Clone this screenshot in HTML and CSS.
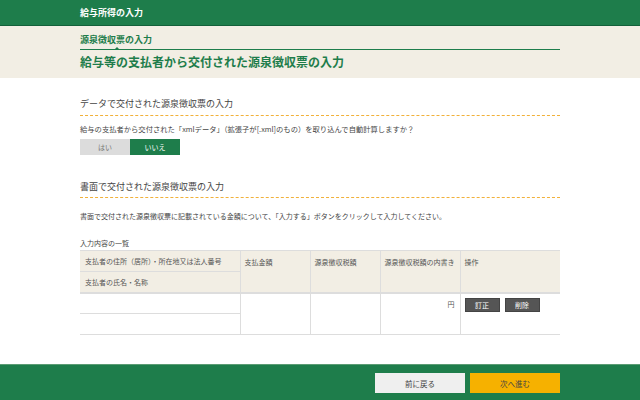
FILE: index.html
```html
<!DOCTYPE html>
<html lang="ja">
<head>
<meta charset="utf-8">
<title>給与所得の入力</title>
<link rel="stylesheet" href="styles.css">
</head>
<body>
<div class="page">
  <header class="topbar">
    <div class="wrap"><span class="topbar-title">給与所得の入力</span></div>
  </header>
  <div class="band">
    <div class="wrap">
      <div class="subtitle">源泉徴収票の入力</div>
      <h1 class="heading">給与等の支払者から交付された源泉徴収票の入力</h1>
    </div>
  </div>
  <main class="main wrap">
    <h2 class="sec-title sec-first">データで交付された源泉徴収票の入力</h2>
    <p class="question">給与の支払者から交付された「xmlデータ」（拡張子が[.xml]のもの）を取り込んで自動計算しますか？</p>
    <div class="toggle">
      <span class="tg tg-off">はい</span><span class="tg tg-on">いいえ</span>
    </div>
    <h2 class="sec-title sec-second">書面で交付された源泉徴収票の入力</h2>
    <p class="desc">書面で交付された源泉徴収票に記載されている金額について、「入力する」ボタンをクリックして入力してください。</p>
    <p class="list-title">入力内容の一覧</p>
    <table class="tbl">
      <colgroup>
        <col class="c1"><col class="c2"><col class="c3"><col class="c4"><col class="c5">
      </colgroup>
      <thead>
        <tr>
          <th class="h-row">支払者の住所（居所）・所在地又は法人番号</th>
          <th rowspan="2" class="h-span">支払金額</th>
          <th rowspan="2" class="h-span">源泉徴収税額</th>
          <th rowspan="2" class="h-span">源泉徴収税額の内書き</th>
          <th rowspan="2" class="h-span">操作</th>
        </tr>
        <tr>
          <th class="h-row">支払者の氏名・名称</th>
        </tr>
      </thead>
      <tbody>
        <tr>
          <td class="b-row"></td>
          <td rowspan="2" class="b-span"></td>
          <td rowspan="2" class="b-span"></td>
          <td rowspan="2" class="b-span yen">円</td>
          <td rowspan="2" class="b-span ops"><span class="op-btn">訂正</span><span class="op-btn">削除</span></td>
        </tr>
        <tr>
          <td class="b-row"></td>
        </tr>
      </tbody>
    </table>
  </main>
  <footer class="footer">
    <div class="wrap footer-inner">
      <span class="fbtn fbtn-back">前に戻る</span>
      <span class="fbtn fbtn-next">次へ進む</span>
    </div>
  </footer>
</div>
</body>
</html>
```
FILE: styles.css
```css
* { box-sizing: border-box; margin: 0; padding: 0; }
html, body { width: 640px; height: 400px; overflow: hidden; }
body {
  font-family: "Noto Sans CJK JP", "Noto Sans", "Liberation Sans", sans-serif;
  color: #555;
  background: #fff;
}
.page { display: flex; flex-direction: column; height: 400px; }
.wrap { width: 480px; margin-left: 80px; }

.topbar {
  height: 26px;
  background: #1e7d4b;
  border-bottom: 1px solid #13603a;
}
.topbar .wrap { height: 25px; display: flex; align-items: center; }
.topbar-title { color: #fff; font-size: 9px; font-weight: bold; line-height: 10px; }

.band { background: #f2eee4; height: 52px; }
.subtitle {
  position: relative;
  padding-top: 9px;
  padding-bottom: 4px;
  font-size: 9px;
  line-height: 10px;
  font-weight: bold;
  color: #1e7d4b;
  border-bottom: 1px solid #1e7d4b;
}
.subtitle::after {
  content: "";
  position: absolute;
  left: 35px;
  bottom: 0;
  border-left: 2px solid transparent;
  border-right: 2px solid transparent;
  border-bottom: 2px solid #1e7d4b;
}
.heading {
  margin-top: 3px;
  font-size: 12px;
  line-height: 18px;
  font-weight: bold;
  color: #1e7d4b;
}

.main { flex: 1; }
.sec-title {
  font-size: 9px;
  line-height: 12px;
  font-weight: normal;
  color: #444;
  padding-bottom: 5px;
  border-bottom: 1px dashed #f1b13a;
}
.sec-first { margin-top: 20px; }
.sec-second { margin-top: 26px; padding-bottom: 4px; }
.question { margin-top: 8px; font-size: 7.3px; line-height: 10px; color: #444; }
.toggle { margin-top: 5px; display: flex; }
.tg {
  width: 50px; height: 16px;
  display: flex; align-items: center; justify-content: center;
  font-size: 7px;
}
.tg-off { background: #dcdcdc; color: #777; }
.tg-on { background: #1e7d4b; color: #fff; }
.desc { margin-top: 13px; font-size: 7px; line-height: 10px; color: #444; }
.list-title { margin-top: 17px; font-size: 7px; line-height: 10px; color: #444; }

.tbl {
  margin-top: 2px;
  width: 480px;
  table-layout: fixed;
  border-collapse: collapse;
  font-size: 7px;
  color: #555;
}
.c1 { width: 160px; } .c2 { width: 70px; } .c3 { width: 70px; } .c4 { width: 80px; } .c5 { width: 100px; }
.tbl th {
  background: #f2eee4;
  font-weight: normal;
  text-align: left;
  border-top: 1px solid #ddd;
}
.tbl thead tr:last-child th, .tbl th.h-span { border-bottom: 2px solid #ddd; }
.h-row { height: 21px; padding: 0 5px; vertical-align: middle; }
.h-span { vertical-align: top; padding: 6px 4px 0; border-left: 1px solid #ddd; }
.tbl td { border-bottom: 1px solid #ddd; }
.b-row { height: 21px; }
.b-span { border-left: 1px solid #ddd; vertical-align: top; }
.yen { text-align: right; padding: 5px 5px 0; }
.ops { padding: 4px 0 0 4px; }
.op-btn {
  display: inline-flex; align-items: center; justify-content: center;
  width: 35px; height: 14px;
  margin-right: 5px;
  background: #555;
  border: 1px solid #444;
  color: #fff;
  font-size: 7px;
}

.footer {
  height: 36px;
  background: #1e7d4b;
  border-top: 1px solid #5b9c74;
}
.footer-inner { display: flex; justify-content: flex-end; gap: 5px; padding-top: 8px; }
.fbtn {
  width: 90px; height: 20px;
  display: flex; align-items: center; justify-content: center;
  font-size: 7.5px; color: #444;
}
.fbtn-back { background: #efefef; }
.fbtn-next { background: #f6b100; }
```
